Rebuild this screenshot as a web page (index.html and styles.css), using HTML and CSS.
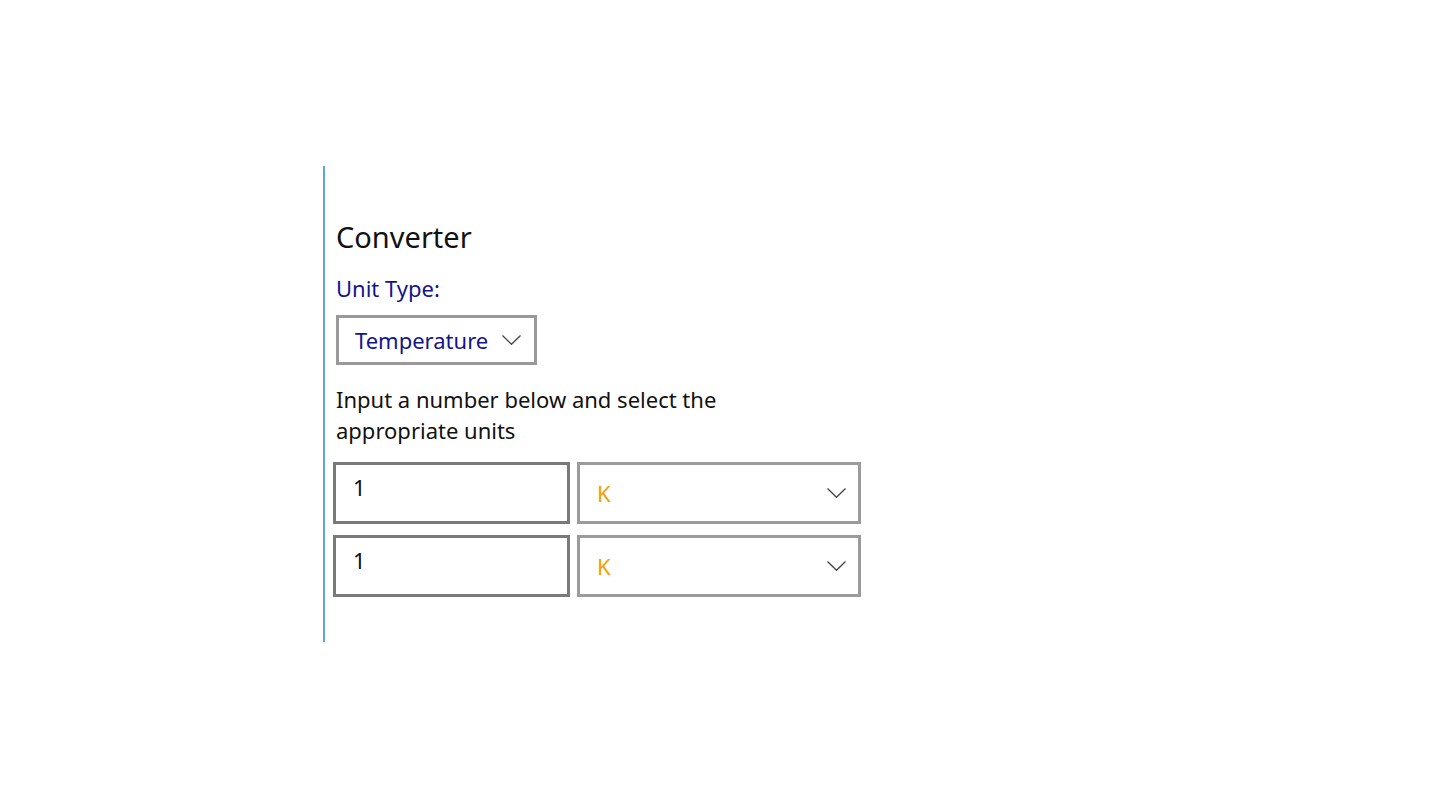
FILE: index.html
```html
<!DOCTYPE html>
<html>
<head>
  <meta charset="utf-8">
  <title>Converter</title>
  <link rel="stylesheet" href="styles.css">
</head>
<body>
  <div class="panel">
    <h1 class="title">Converter</h1>
    <label class="unit-label">Unit Type:</label>
    <div class="combo type-combo">
      <span class="combo-text">Temperature</span>
      <svg class="chevron" width="19" height="10" viewBox="0 0 19 10"><path d="M0.5 0.5 L9.5 9.3 L18.5 0.5" fill="none" stroke="#444" stroke-width="1.3"/></svg>
    </div>
    <p class="hint">Input a number below and select the appropriate units</p>
    <!-- value row: number box + unit picker -->
    <div class="row">
      <input class="number" type="text" value="1">
      <div class="combo unit-combo">
        <span class="unit">K</span>
        <svg class="chevron" width="19" height="10" viewBox="0 0 19 10"><path d="M0.5 0.5 L9.5 9.3 L18.5 0.5" fill="none" stroke="#444" stroke-width="1.3"/></svg>
      </div>
    </div>
    <div class="row">
      <input class="number" type="text" value="1">
      <div class="combo unit-combo">
        <span class="unit">K</span>
        <svg class="chevron" width="19" height="10" viewBox="0 0 19 10"><path d="M0.5 0.5 L9.5 9.3 L18.5 0.5" fill="none" stroke="#444" stroke-width="1.3"/></svg>
      </div>
    </div>
  </div>
</body>
</html>
```
FILE: styles.css
```css
body {
  margin: 0;
  background: #fff;
  font-family: "Noto Sans", "Open Sans", sans-serif;
  color: #111;
}
.panel {
  box-sizing: border-box;
  margin: 166px 0 0 323px;
  height: 476px;
  width: 560px;
  border-left: 2px solid #5ba7dc;
  padding: 51px 0 0 11px;
  display: flex;
  flex-direction: column;
  align-items: flex-start;
}
.title {
  margin: 0;
  font-size: 29px;
  font-weight: normal;
  line-height: 40px;
  color: #111;
}
.unit-label {
  margin-top: 16px;
  font-size: 22px;
  line-height: 30px;
  color: #14148a;
}
.combo {
  box-sizing: border-box;
  display: flex;
  align-items: center;
  justify-content: space-between;
  background: #fff;
}
.type-combo {
  margin-top: 12px;
  width: 201px;
  height: 50px;
  border: 3px solid #999;
  padding: 0 13px 0 16px;
}
.combo-text {
  font-size: 22px;
  line-height: 30px;
  color: #14148a;
}
.hint {
  margin: 19px 0 0 0;
  width: 400px;
  font-size: 22px;
  line-height: 31px;
  color: #111;
}
.row {
  display: flex;
  gap: 7px;
  margin-left: -3px;
}
.hint + .row {
  margin-top: 16px;
}
.row + .row {
  margin-top: 11px;
}
.number {
  box-sizing: border-box;
  width: 237px;
  height: 62px;
  margin: 0;
  border: 3px solid #7a7a7a;
  padding: 6px 17px 18px;
  font-family: "Noto Sans", "Open Sans", sans-serif;
  font-size: 22px;
  color: #111;
  outline: none;
}
.unit-combo {
  width: 284px;
  height: 62px;
  border: 3px solid #9b9b9b;
  padding: 0 12px 0 17px;
}
.unit {
  font-size: 22px;
  line-height: 30px;
  color: #f5a000;
}
```
